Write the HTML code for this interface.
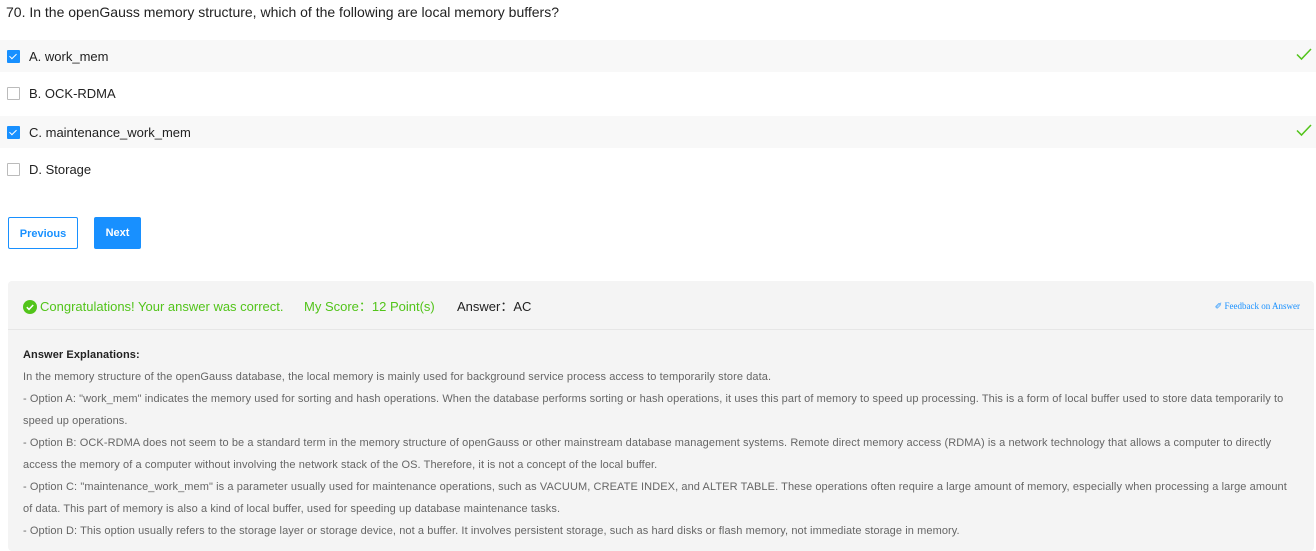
<!DOCTYPE html>
<html><head><style>
body{margin:0;width:1316px;height:545px;overflow:hidden;background:#fff;font-family:"Liberation Sans",Arial,sans-serif;color:#222;position:relative}
.q{position:absolute;left:6px;top:3px;font-size:14px;line-height:18px}
.row{position:absolute;left:0;width:1316px;height:32px}
.row.sel{background:#f8f8f8}
.cb{position:absolute;left:7px;top:10px;width:11px;height:11px;border:1px solid #bbb;background:#fff;border-radius:1px}
.cb.on{background:#1890ff;border-color:#1890ff}
.cb.on:after{content:"";position:absolute;left:3px;top:1px;width:3px;height:6px;border:solid #fff;border-width:0 1.5px 1.5px 0;transform:rotate(45deg)}
.lbl{position:absolute;left:29px;top:9px;font-size:13px;line-height:16px}
.tick{position:absolute;right:4px;top:6px}
.btn{position:absolute;top:217px;height:30px;font-size:11px;font-weight:bold;text-align:center;line-height:30px;box-sizing:border-box;border-radius:2px}
.panel{position:absolute;left:8px;top:281px;width:1306px;height:270px;background:#f4f4f4;border-radius:4px}
.hdr{position:absolute;left:0;top:0;width:100%;height:48px;border-bottom:1px solid #e6e6e6;font-size:13px}
.hdr span{top:18px;line-height:16px}
.exp{position:absolute;left:15px;top:63px;width:1280px;font-size:11px;line-height:22px;color:#666;letter-spacing:0.09px}
</style></head><body>
<div class="q">70. In the openGauss memory structure, which of the following are local memory buffers?</div>
<div class="row sel" style="top:40px"><div class="cb on"></div><div class="lbl">A. work_mem</div>
<svg class="tick" width="16" height="16" viewBox="0 0 16 16"><path d="M1 8.5l4.5 4.5L15 3" fill="none" stroke="#52c41a" stroke-width="1.5"/></svg></div>
<div class="row" style="top:77px"><div class="cb"></div><div class="lbl">B. OCK-RDMA</div></div>
<div class="row sel" style="top:116px"><div class="cb on"></div><div class="lbl">C. maintenance_work_mem</div>
<svg class="tick" width="16" height="16" viewBox="0 0 16 16"><path d="M1 8.5l4.5 4.5L15 3" fill="none" stroke="#52c41a" stroke-width="1.5"/></svg></div>
<div class="row" style="top:153px"><div class="cb"></div><div class="lbl">D. Storage</div></div>
<div class="btn" style="left:8px;width:70px;border:1px solid #1890ff;color:#1890ff;height:32px;line-height:32px">Previous</div>
<div class="btn" style="left:94px;width:47px;background:#1890ff;color:#fff;height:32px;line-height:32px">Next</div>
<div class="panel">
<div class="hdr">
<svg style="position:absolute;left:15px;top:19px" width="14" height="14" viewBox="0 0 14 14"><circle cx="7" cy="7" r="7" fill="#52c41a"/><path d="M3.8 7.2l2.2 2.2 4.2-4.4" fill="none" stroke="#fff" stroke-width="1.5"/></svg>
<span style="position:absolute;left:32px;color:#52c41a">Congratulations! Your answer was correct.</span>
<span style="position:absolute;left:296px;color:#52c41a">My Score：12 Point(s)</span>
<span style="position:absolute;left:449px;color:#222">Answer：AC</span>
<span style="position:absolute;right:14px;top:19px;line-height:12px;font-size:9px;color:#1890ff;font-family:'Liberation Serif',serif">✐ Feedback on Answer</span>
</div>
<div class="exp">
<div style="color:#222;font-weight:bold">Answer Explanations:</div>
<div>In the memory structure of the openGauss database, the local memory is mainly used for background service process access to temporarily store data.</div>
<div>- Option A: "work_mem" indicates the memory used for sorting and hash operations. When the database performs sorting or hash operations, it uses this part of memory to speed up processing. This is a form of local buffer used to store data temporarily to speed up operations.</div>
<div>- Option B: OCK-RDMA does not seem to be a standard term in the memory structure of openGauss or other mainstream database management systems. Remote direct memory access (RDMA) is a network technology that allows a computer to directly access the memory of a computer without involving the network stack of the OS. Therefore, it is not a concept of the local buffer.</div>
<div>- Option C: "maintenance_work_mem" is a parameter usually used for maintenance operations, such as VACUUM, CREATE INDEX, and ALTER TABLE. These operations often require a large amount of memory, especially when processing a large amount<br>of data. This part of memory is also a kind of local buffer, used for speeding up database maintenance tasks.</div>
<div>- Option D: This option usually refers to the storage layer or storage device, not a buffer. It involves persistent storage, such as hard disks or flash memory, not immediate storage in memory.</div>
</div>
</div>
</body></html>
